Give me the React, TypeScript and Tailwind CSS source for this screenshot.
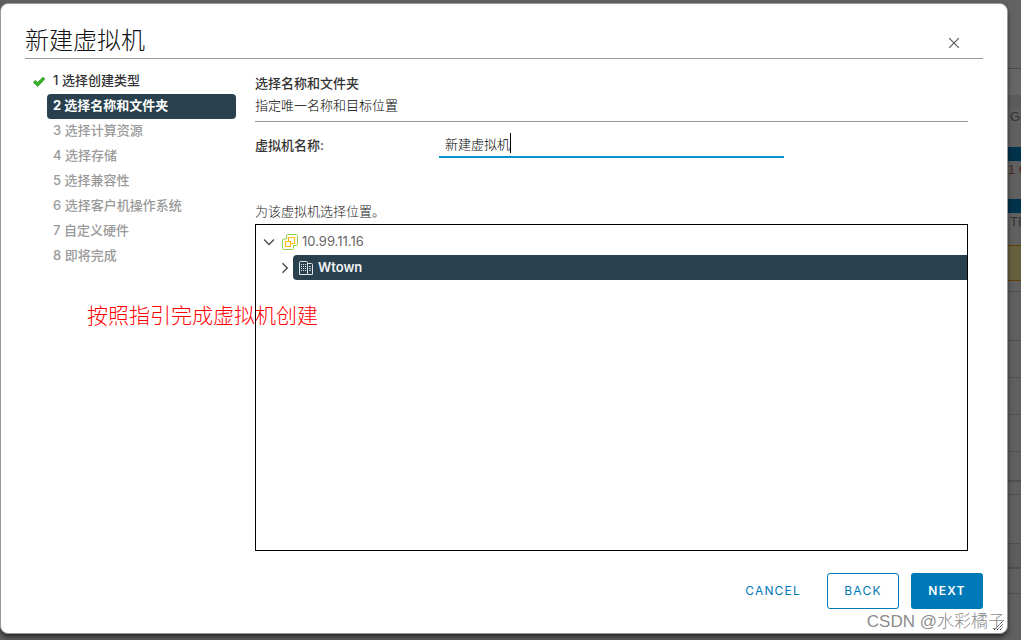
import React, { useState } from 'react';

const STEPS = [
  '选择创建类型',
  '选择名称和文件夹',
  '选择计算资源',
  '选择存储',
  '选择兼容性',
  '选择客户机操作系统',
  '自定义硬件',
  '即将完成',
];

// Rows of the dimmed page that stay visible next to the dialog
const BACKDROP_ROWS = [
  { className: 'h-[69px] border-b border-[#4c4c4c] bg-[#636363]' },
  { className: 'h-[26px] bg-[#666666]' },
  { className: 'h-[13px] bg-[#5c5c5c]' },
  { className: 'h-[39px] pl-[2px]', text: 'GR' },
  { className: 'h-[14px] bg-[#00324b]' },
  { className: 'h-[38px]', text: '1 G', warn: true },
  { className: 'h-[14px] bg-[#00324b]' },
  { className: 'h-[32px] pl-[2px]', text: 'TE' },
  { className: 'h-[36px] border-y border-[#5f4102] bg-[#66603f]' },
  { className: 'h-[11px] border-b border-[#505050]' },
  { className: 'h-[49px] border-b border-[#505050]' },
  { className: 'h-[37px] border-b border-[#525252]' },
  { className: 'h-[37px] border-b border-[#525252]' },
  { className: 'h-[37px] border-b border-[#525252]' },
  { className: 'h-[30px] border-b-2 border-[#505050]' },
  { className: 'h-[13px] border-b border-[#505050]' },
  { className: 'h-[49px] border-b border-[#505050]' },
  { className: 'h-[25px] border-b-2 border-[#505050] bg-[#5d5d5d]' },
  { className: 'h-[25px] border-b border-[#505050]' },
];

const CheckIcon = () => (
  <svg className="h-3 w-3" viewBox="0 0 12 12" aria-hidden="true">
    <path d="M0.4 6.4 2.3 4.4 4.7 6.4 10 1.2 11.8 3 4.9 10.4z" fill="#35b526" stroke="#218a18" strokeWidth="0.7" />
  </svg>
);

const Chevron: React.FC<{ open?: boolean }> = ({ open }) => (
  <svg className="h-3 w-3" viewBox="0 0 12 12" fill="none" stroke="#4d4d4d" strokeWidth="1.4" aria-hidden="true">
    {open ? <path d="M1 3.5 6 8.5 11 3.5" /> : <path d="M3.5 1.2 8.3 6 3.5 10.8" />}
  </svg>
);

const VCenterIcon = () => (
  <svg className="h-4 w-4" viewBox="0 0 16 16" fill="none" aria-hidden="true">
    <path
      d="M5.5 0.5H14.5Q15.5 0.5 15.5 1.5V10.5Q15.5 11.5 14.5 11.5H11.5V14.5Q11.5 15.5 10.5 15.5H1.5Q0.5 15.5 0.5 14.5V6Q0.5 5 1.5 5H4.5V1.5Q4.5 0.5 5.5 0.5Z"
      stroke="#94d04a"
    />
    <path d="M6.5 9.5V3.5H12.5V9.5H6.5Z" stroke="#fdb813" strokeWidth="1.2" />
    <path d="M3.5 7.5V12.5H8.5V7.5H3.5Z" fill="#fff" stroke="#fdb813" strokeWidth="1.2" />
  </svg>
);

const DatacenterIcon = () => (
  <svg className="h-4 w-4" viewBox="0 0 16 16" fill="none" stroke="#dfe5e8" aria-hidden="true">
    <path d="M1.5 14.5V2.5Q1.5 1.5 2.5 1.5H8.5Q9.5 1.5 9.5 2.5V14.5Z" />
    <path d="M9.5 3.5H13.5Q14.5 3.5 14.5 4.5V14.5H9.5" />
    <path d="M3 4.5H8M3 6.5H8M3 8.5H8M3 10.5H8" strokeDasharray="1 1" />
    <path d="M11 6.5H13M11 8.5H13M11 10.5H13" strokeOpacity="0.8" />
  </svg>
);

const Backdrop = () => (
  <div
    className="w-[13px] shrink-0 overflow-hidden font-['Liberation_Sans',sans-serif] text-[13px] leading-[18px] text-[#333]"
    aria-hidden="true"
  >
    {BACKDROP_ROWS.map((row, i) => (
      <div key={i} className={`${row.className} whitespace-nowrap`}>
        {row.text && <span className={row.warn ? 'text-[#4a2a22]' : ''}>{row.text}</span>}
      </div>
    ))}
  </div>
);

const StepList: React.FC<{ current: number }> = ({ current }) => (
  <ol className="w-[211px] shrink-0 pt-[10px] pl-2 text-[13px]">
    {STEPS.map((label, i) => (
      <li key={label} className="flex h-[25px] items-center">
        <span className="w-[14px] shrink-0">{i < current && <CheckIcon />}</span>
        {i === current ? (
          <span
            className="h-[25px] flex-1 rounded bg-[#29414e] pl-[6px] leading-[23px] font-bold text-white"
            aria-current="step"
          >
            {i + 1} {label}
          </span>
        ) : (
          <span
            className={`h-[25px] pl-[6px] leading-[23px] font-medium ${i < current ? 'text-[#333]' : 'text-[#9a9a9a]'}`}
          >
            {i + 1} {label}
          </span>
        )}
      </li>
    ))}
  </ol>
);

const FolderTree = () => (
  <div className="flex-1 border border-black pt-1 text-[13px] leading-[25px]" role="tree">
    <div className="flex items-center pl-[7px]" role="treeitem" aria-expanded="true">
      <button type="button" aria-label="折叠" className="mr-[7px]">
        <Chevron open />
      </button>
      <VCenterIcon />
      <span className="pl-1 text-[#666]">10.99.11.16</span>
    </div>
    <div className="mt-px flex items-center pl-[23px]" role="treeitem" aria-expanded="false">
      <button type="button" aria-label="展开" className="mr-[2px]">
        <Chevron />
      </button>
      <div className="flex h-[25px] flex-1 items-center rounded-l bg-[#29414e] pl-[5px]">
        <DatacenterIcon />
        <span className="pl-1 leading-[23px] font-semibold text-[#f0f3f4]">Wtown</span>
      </div>
    </div>
  </div>
);

const App: React.FC = () => {
  const [name, setName] = useState('新建虚拟机');

  return (
    <div className="flex min-h-screen bg-[#606060] font-['Inter','Noto_Sans_CJK_SC',sans-serif]">
      <div
        className="relative mt-[3px] mb-[6px] flex flex-1 flex-col rounded-lg border border-[#999] bg-white px-6 shadow-md shadow-black/50"
        role="dialog"
        aria-labelledby="wizard-title"
      >
        <header className="flex h-[55px] items-center justify-between border-b border-[#9a9a9a] pt-5">
          <h1 id="wizard-title" className="text-2xl font-light text-[#111]">
            新建虚拟机
          </h1>
          <button type="button" aria-label="关闭" className="mt-1 mr-6">
            <svg className="h-[10px] w-[10px]" viewBox="0 0 10 10" stroke="#555" strokeWidth="1.1" aria-hidden="true">
              <path d="M0 0 10 10M10 0 0 10" />
            </svg>
          </button>
        </header>

        <div className="flex flex-1">
          <StepList current={1} />
          <main className="ml-[19px] flex flex-1 flex-col pt-[13px] pr-[15px] text-[13px] text-[#333]">
            <h2 className="leading-[22px] font-medium">选择名称和文件夹</h2>
            <p className="border-b border-[#9a9a9a] pb-[5px] leading-[22px] font-light text-black">
              指定唯一名称和目标位置
            </p>
            <div className="flex pt-[10px]">
              <label htmlFor="vm-name" className="w-[184px] shrink-0 leading-[26px] font-medium">
                虚拟机名称:
              </label>
              <span className="flex w-[345px] items-center border-b-2 border-[#0092d0] pb-[2px] pl-[6px]">
                <input
                  id="vm-name"
                  type="text"
                  value={name}
                  onChange={e => setName(e.target.value)}
                  className="field-sizing-content h-5 border-r border-black font-light text-black outline-none"
                />
              </span>
            </div>
            <p className="pt-[41px] pb-px leading-6 font-light text-[#222]">为该虚拟机选择位置。</p>
            <FolderTree />
          </main>
        </div>

        <footer className="flex justify-end gap-3 pt-[22px] pb-6 text-xs tracking-widest">
          <button type="button" className="h-9 px-[14px] text-[#0079b8]">
            CANCEL
          </button>
          <button type="button" className="h-9 w-[72px] rounded-[3px] border border-[#0079b8] text-[#0079b8]">
            BACK
          </button>
          <button type="button" className="h-9 w-[72px] rounded-[3px] bg-[#0079b8] font-semibold text-white">
            NEXT
          </button>
        </footer>

        <p className="pointer-events-none absolute top-[300px] left-[86px] text-[21px] leading-6 font-light text-[#ff0000]">
          按照指引完成虚拟机创建
        </p>
        <svg className="absolute right-1 bottom-[3px] h-[9px] w-[9px]" viewBox="0 0 9 9" stroke="#333" aria-hidden="true">
          <path d="M0 9 9 0M3 9 9 3M6 9 9 6" strokeDasharray="1.4 0.6" />
        </svg>
        <span className="pointer-events-none absolute right-[2px] -bottom-px font-['Liberation_Sans','Noto_Sans_CJK_SC',sans-serif] text-[17px] leading-6 font-light text-[#8c8c8c] [text-shadow:-1px_-1px_0_#fff]">
          CSDN @水彩橘子
        </span>
      </div>
      <Backdrop />
    </div>
  );
};

export default App;
